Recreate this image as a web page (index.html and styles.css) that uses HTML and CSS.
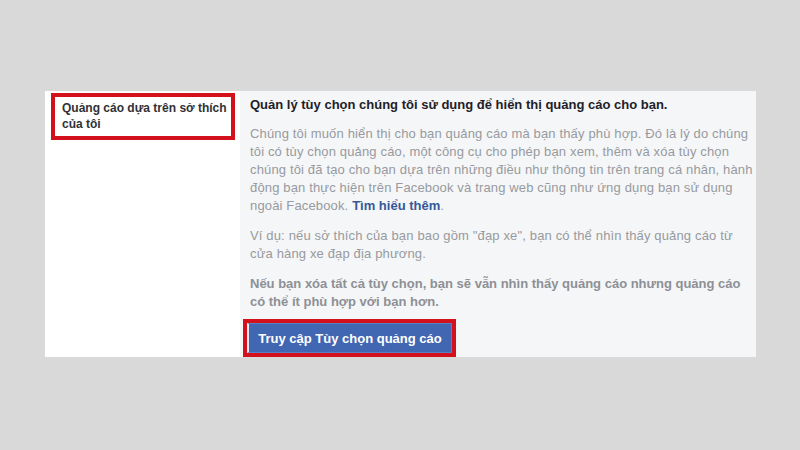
FILE: index.html
```html
<!DOCTYPE html>
<html lang="vi">
<head>
    <meta charset="utf-8">
    <title>Tùy chọn quảng cáo</title>
    <link rel="stylesheet" href="styles.css">
</head>
<body>
    <div class="panel">
        <div class="side">
            <div class="label marked">Quảng cáo dựa trên sở thích<br>của tôi</div>
        </div>
        <div class="content">
            <h2>Quản lý tùy chọn chúng tôi sử dụng để hiển thị quảng cáo cho bạn.</h2>
            <p>
                Chúng tôi muốn hiển thị cho bạn quảng cáo mà bạn thấy phù hợp. Đó là lý do chúng<br>
                tôi có tùy chọn quảng cáo, một công cụ cho phép bạn xem, thêm và xóa tùy chọn<br>
                chúng tôi đã tạo cho bạn dựa trên những điều như thông tin trên trang cá nhân, hành<br>
                động bạn thực hiện trên Facebook và trang web cũng như ứng dụng bạn sử dụng<br>
                ngoài Facebook. <a href="#" class="link">Tìm hiểu thêm</a>.
            </p>
            <p>
                Ví dụ: nếu sở thích của bạn bao gồm "đạp xe", bạn có thể nhìn thấy quảng cáo từ<br>
                cửa hàng xe đạp địa phương.
            </p>
            <p class="strong">
                Nếu bạn xóa tất cả tùy chọn, bạn sẽ vẫn nhìn thấy quảng cáo nhưng quảng cáo<br>
                có thể ít phù hợp với bạn hơn.
            </p>
            <div class="marked btn-wrap">
                <button class="btn">Truy cập Tùy chọn quảng cáo</button>
            </div>
        </div>
    </div>
</body>
</html>
```

FILE: styles.css
```css
* {
    margin: 0;
    padding: 0;
    box-sizing: border-box;
}

body {
    font-family: "Liberation Sans", Arial, sans-serif;
    font-size: 12px;
    background: #d9d9d9;
    padding-top: 91px;
}

.panel {
    display: flex;
    width: 711px;
    height: 266px;
    margin-left: 45px;
    background: #fff;
}

.side {
    width: 195px;
    padding: 2px 5px 0 6px;
}

.marked {
    border: 4px solid #d2111d;
}

.label {
    padding: 3px 0 0 7px;
    font-weight: bold;
    color: #2f3136;
    line-height: 16px;
    height: 47px;
    white-space: nowrap;
}

.content {
    flex: 1;
    background: #f5f6f7;
    padding: 5px 0 0 10px;
    color: #979aa0;
    font-size: 13px;
    line-height: 18px;
}

h2 {
    font-size: 13px;
    color: #1d2129;
    margin-bottom: 11px;
}

p {
    margin-bottom: 12px;
    white-space: nowrap;
    letter-spacing: 0.15px;
}

.strong {
    font-weight: bold;
    color: #8d9096;
    letter-spacing: 0;
    margin-bottom: 8px;
}

.link {
    color: #365899;
    font-weight: bold;
    text-decoration: none;
    letter-spacing: 0;
}

.btn-wrap {
    display: inline-block;
    margin-left: -7px;
}

.btn {
    display: block;
    background: #4267b2;
    color: #fff;
    border: 1px solid #5a7fc4;
    border-left: 2px solid #e8ecf4;
    font-family: inherit;
    font-size: 13px;
    font-weight: bold;
    white-space: nowrap;
    padding: 0 8px;
    height: 30px;
    width: 205px;
}
```
